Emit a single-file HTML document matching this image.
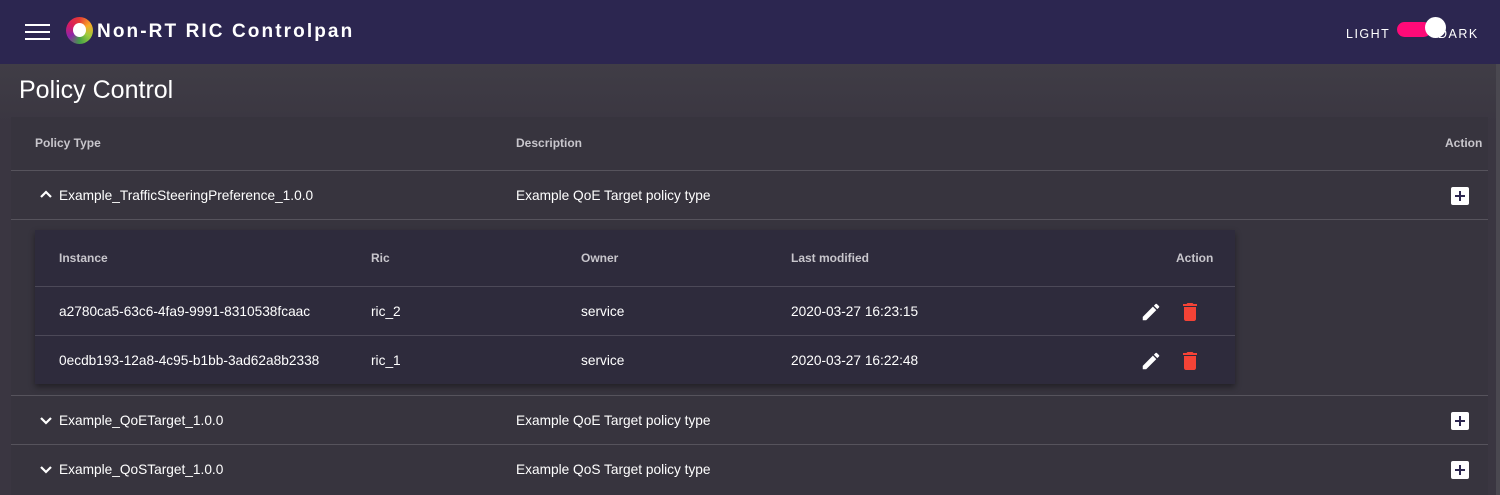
<!DOCTYPE html>
<html><head><style>
*{box-sizing:border-box;margin:0;padding:0}
body{width:1500px;height:495px;overflow:hidden;background:#3b3941;font-family:"Liberation Sans",Arial,sans-serif;color:#fff;position:relative}
.hdr{position:absolute;left:0;top:0;width:1500px;height:64px;background:#2c2650}
.ham{position:absolute;left:25px;top:24px;width:25px}
.ham i{display:block;height:2px;background:#fff;margin-bottom:5px}
.logo{position:absolute;left:66px;top:17px;width:27px;height:27px;border-radius:50%;background:conic-gradient(#e53935,#f9a825,#9ccc3d,#43a047,#8e24aa,#d81b60,#e53935)}
.logo:after{content:"";position:absolute;left:7px;top:6px;width:13px;height:14px;border-radius:50%;background:#fff}
.title{position:absolute;left:97px;top:21px;font-size:19px;font-weight:bold;letter-spacing:2.1px;width:257px;overflow:hidden;white-space:nowrap}
.light{position:absolute;left:1346px;top:27px;font-size:12.5px;letter-spacing:1.5px}
.dark{position:absolute;left:1438px;top:27px;font-size:12.5px;letter-spacing:1.5px}
.track{position:absolute;left:1397px;top:22px;width:34px;height:15px;border-radius:8px;background:#ff0a78}
.knob{position:absolute;left:1425px;top:17px;width:21px;height:21px;border-radius:50%;background:#fff}
.main{position:absolute;left:0;top:64px;width:1496px;height:431px;background:linear-gradient(#403d46,#3a3641 60px)}
.edge{position:absolute;right:0;top:64px;width:4px;height:431px;background:#4a4850}
h1{position:absolute;left:19px;top:76px;font-size:25px;font-weight:normal}
.tbl{position:absolute;left:11px;top:117px;width:1477px;height:378px;background:#37343e}
.th{position:absolute;font-size:12px;font-weight:bold;color:#c8c6cc}
.row{position:absolute;left:0;width:1477px;border-top:1px solid #56535c}
.cell{position:absolute;font-size:13.7px;color:#fff}
.plus{position:absolute;left:1440px;width:18px;height:18px;background:#fff;border-radius:2px}
.plus:before{content:"";position:absolute;left:4px;top:8px;width:10px;height:2px;background:#2c2650}
.plus:after{content:"";position:absolute;left:8px;top:4px;width:2px;height:10px;background:#2c2650}
.card{position:absolute;left:24px;top:113px;width:1200px;height:154px;background:#2e2b3c;box-shadow:0 3px 6px rgba(0,0,0,.4)}
.cr{position:absolute;left:0;width:1200px;border-top:1px solid #4c4958}
</style></head><body>
<div class="hdr">
<div class="ham"><i></i><i></i><i></i></div>
<div class="logo"></div>
<div class="title">Non-RT RIC Controlpanel</div>
<div class="light">LIGHT</div><div class="dark">DARK</div>
<div class="track"></div><div class="knob"></div>
</div>
<div class="main"></div><div class="edge"></div>
<h1>Policy Control</h1>
<div class="tbl">
<div class="th" style="left:24px;top:19px">Policy Type</div>
<div class="th" style="left:505px;top:19px">Description</div>
<div class="th" style="left:1434px;top:19px">Action</div>
<div class="row" style="top:53px;height:49px">
<svg style="position:absolute;left:28px;top:18px" width="14" height="10" viewBox="0 0 14 10"><path d="M2 8 L7 3 L12 8" stroke="#fff" stroke-width="2.2" fill="none"/></svg>
<div class="cell" style="left:48px;top:17px">Example_TrafficSteeringPreference_1.0.0</div>
<div class="cell" style="left:505px;top:17px">Example QoE Target policy type</div>
<div class="plus" style="top:16px"></div></div>
<div class="row" style="top:102px;height:176px"></div>
<div class="card">
<div class="th" style="left:24px;top:21px">Instance</div>
<div class="th" style="left:336px;top:21px">Ric</div>
<div class="th" style="left:546px;top:21px">Owner</div>
<div class="th" style="left:756px;top:21px">Last modified</div>
<div class="th" style="left:1141px;top:21px">Action</div>
<div class="cr" style="top:56px;height:49px">
<div class="cell" style="left:24px;top:17px">a2780ca5-63c6-4fa9-9991-8310538fcaac</div>
<div class="cell" style="left:336px;top:17px">ric_2</div>
<div class="cell" style="left:546px;top:17px">service</div>
<div class="cell" style="left:756px;top:17px">2020-03-27 16:23:15</div>
<svg style="position:absolute;left:1105px;top:14px" width="22" height="22" viewBox="0 0 24 24"><path fill="#fff" d="M3 17.25V21h3.75L17.81 9.94l-3.75-3.75L3 17.25zM20.71 7.04a1 1 0 000-1.41l-2.34-2.34a1 1 0 00-1.41 0l-1.83 1.83 3.75 3.75 1.83-1.83z"/></svg>
<svg style="position:absolute;left:1143px;top:13px" width="24" height="24" viewBox="0 0 24 24"><path fill="#f44336" d="M6 19c0 1.1.9 2 2 2h8c1.1 0 2-.9 2-2V7H6v12zM19 4h-3.5l-1-1h-5l-1 1H5v2h14V4z"/></svg>
</div>
<div class="cr" style="top:105px;height:49px">
<div class="cell" style="left:24px;top:17px">0ecdb193-12a8-4c95-b1bb-3ad62a8b2338</div>
<div class="cell" style="left:336px;top:17px">ric_1</div>
<div class="cell" style="left:546px;top:17px">service</div>
<div class="cell" style="left:756px;top:17px">2020-03-27 16:22:48</div>
<svg style="position:absolute;left:1105px;top:14px" width="22" height="22" viewBox="0 0 24 24"><path fill="#fff" d="M3 17.25V21h3.75L17.81 9.94l-3.75-3.75L3 17.25zM20.71 7.04a1 1 0 000-1.41l-2.34-2.34a1 1 0 00-1.41 0l-1.83 1.83 3.75 3.75 1.83-1.83z"/></svg>
<svg style="position:absolute;left:1143px;top:13px" width="24" height="24" viewBox="0 0 24 24"><path fill="#f44336" d="M6 19c0 1.1.9 2 2 2h8c1.1 0 2-.9 2-2V7H6v12zM19 4h-3.5l-1-1h-5l-1 1H5v2h14V4z"/></svg>
</div>
</div>
<div class="row" style="top:278px;height:49px">
<svg style="position:absolute;left:28px;top:20px" width="14" height="10" viewBox="0 0 14 10"><path d="M2 2 L7 7 L12 2" stroke="#fff" stroke-width="2.2" fill="none"/></svg>
<div class="cell" style="left:48px;top:17px">Example_QoETarget_1.0.0</div>
<div class="cell" style="left:505px;top:17px">Example QoE Target policy type</div>
<div class="plus" style="top:16px"></div></div>
<div class="row" style="top:327px;height:51px">
<svg style="position:absolute;left:28px;top:20px" width="14" height="10" viewBox="0 0 14 10"><path d="M2 2 L7 7 L12 2" stroke="#fff" stroke-width="2.2" fill="none"/></svg>
<div class="cell" style="left:48px;top:17px">Example_QoSTarget_1.0.0</div>
<div class="cell" style="left:505px;top:17px">Example QoS Target policy type</div>
<div class="plus" style="top:16px"></div></div>
</div>
</body></html>
